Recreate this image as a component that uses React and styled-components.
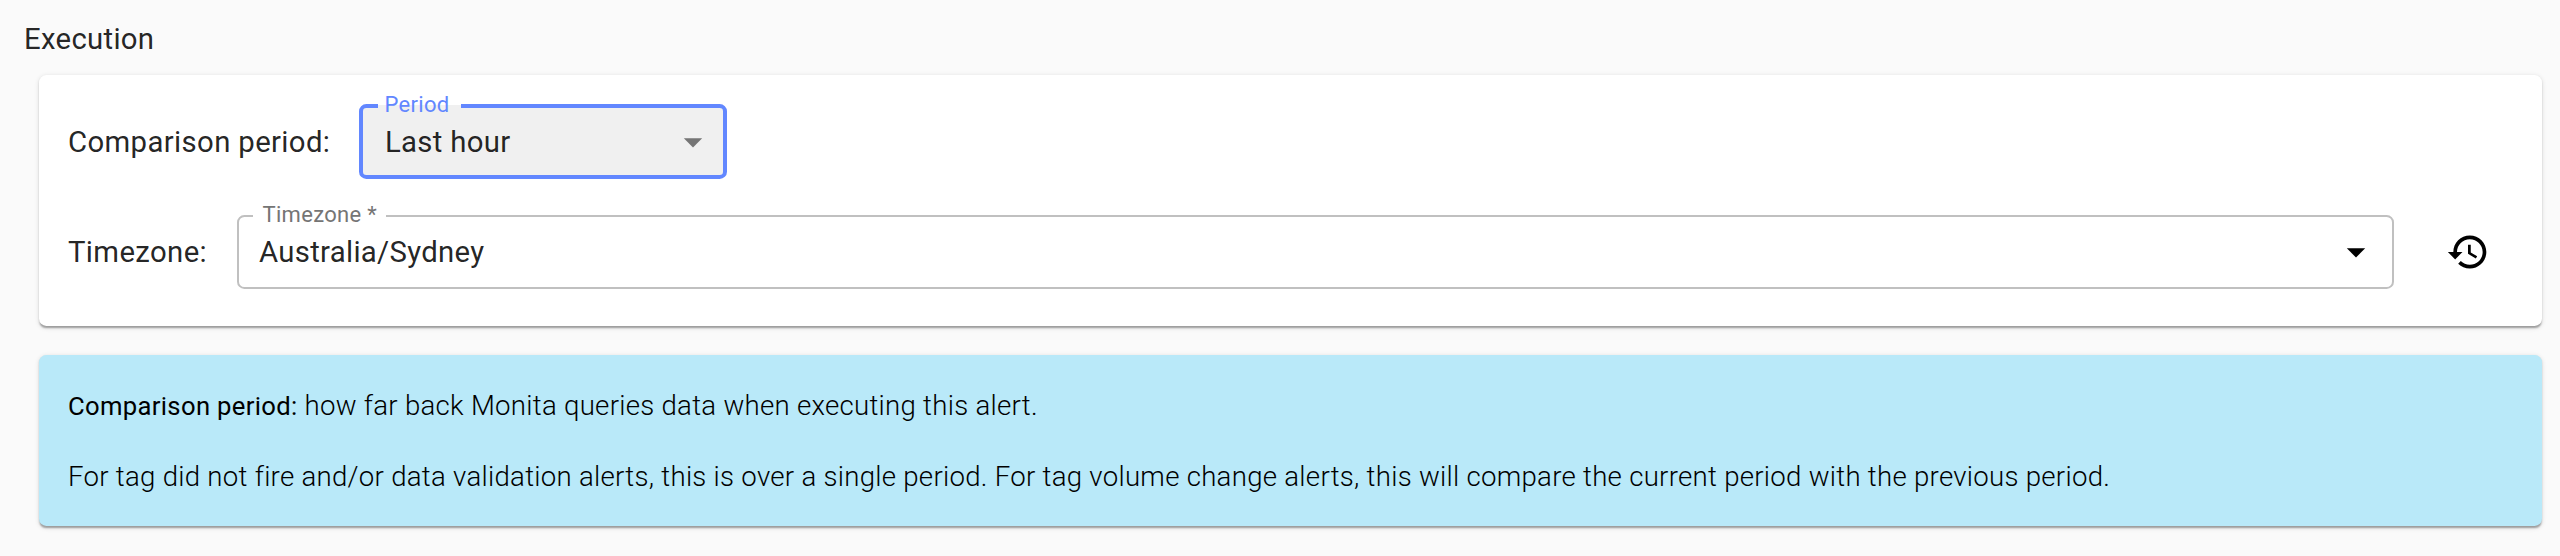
import React from "react";
import styled, { createGlobalStyle } from "styled-components";

const GlobalStyle = createGlobalStyle`
  *, *::before, *::after { box-sizing: border-box; }
  body {
    margin: 0;
    background: #fafafa;
    color: rgba(0, 0, 0, 0.87);
    font-family: Roboto, "Liberation Sans", sans-serif;
  }
`;

const Page = styled.main`
  min-height: 556px;
  padding: 17px 18px 0 24px;
`;

const Heading = styled.h2`
  margin: 0;
  height: 58px;
  font-size: 29.33px;
  font-weight: 400;
  line-height: 44px;
  letter-spacing: 0.3px;
`;

const Panel = styled.section`
  margin-left: 15px;
  border-radius: 7.33px;
  background: ${(p) => p.$color};
  box-shadow: 0 3.67px 1.83px -1.83px rgba(0, 0, 0, 0.2),
    0 1.83px 1.83px 0 rgba(0, 0, 0, 0.14),
    0 1.83px 5.5px 0 rgba(0, 0, 0, 0.12);
`;

const FormPanel = styled(Panel)`
  display: flex;
  flex-direction: column;
  gap: 36px;
  height: 251px;
  margin-bottom: 29px;
  padding: 29px 29px 0;
`;

const InfoPanel = styled(Panel)`
  display: flex;
  flex-direction: column;
  gap: 31px;
  height: 171px;
  padding: 31px 29px 0;
`;

const Row = styled.div`
  display: flex;
  align-items: center;
`;

const RowLabel = styled.label`
  flex: none;
  width: ${(p) => p.$width}px;
  font-size: 29.33px;
  line-height: 44px;
  letter-spacing: 0.36px;
  white-space: nowrap;
`;

const Field = styled.div`
  position: relative;
  display: flex;
  align-items: center;
  justify-content: space-between;
  flex: ${(p) => (p.$focused ? "none" : "1")};
  width: ${(p) => (p.$focused ? "368px" : "auto")};
  height: ${(p) => (p.$focused ? "75px" : "74px")};
  padding: ${(p) => (p.$focused ? "0 8px 0 22px" : "0 14px 0 20px")};
  border: ${(p) => (p.$focused ? "4px solid #6287ff" : "2px solid #c0c0c0")};
  border-radius: 7.33px;
  background: ${(p) => (p.$focused ? "#f0f0f0" : "#fff")};
`;

const FloatingLabel = styled.span`
  position: absolute;
  top: ${(p) => (p.$focused ? "-4px" : "-2px")};
  left: ${(p) => (p.$focused ? "15px" : "14px")};
  display: flex;
  align-items: center;
  width: ${(p) => (p.$focused ? "83px" : "133px")};
  height: ${(p) => (p.$focused ? "4px" : "2px")};
  padding: 0 0 2px ${(p) => (p.$focused ? "6.5px" : "9.5px")};
  background: ${(p) =>
    p.$focused ? "linear-gradient(#fff 1px, #f0f0f0 1px)" : "#fff"};
  color: ${(p) => (p.$focused ? "#6287ff" : "#757575")};
  font-size: 22px;
  line-height: 22px;
  letter-spacing: 0.3px;
  white-space: nowrap;
`;

const Value = styled.span`
  font-size: 29.33px;
  line-height: 36px;
  letter-spacing: 0.3px;
`;

const Icon = styled.svg`
  flex: none;
  width: 44px;
  height: 44px;
  fill: ${(p) => p.$color};
`;

const IconButton = styled.button`
  display: flex;
  margin: 0 23px 0 52px;
  padding: 0;
  border: 0;
  background: none;
`;

const Paragraph = styled.p`
  margin: 0;
  color: #000;
  font-size: 27.64px;
  font-weight: 300;
  line-height: 40px;
  letter-spacing: 0.265px;
`;

const Term = styled.b`
  font-size: 25.67px;
  font-weight: 400;
  letter-spacing: 0.32px;
`;

function DropdownArrow({ color }) {
  return (
    <Icon viewBox="0 0 24 24" $color={color}>
      <path d="M7 10l5 5 5-5z" />
    </Icon>
  );
}

function HistoryIcon() {
  return (
    <Icon viewBox="0 0 24 24" $color="#000">
      <path d="M13 3c-4.97 0-9 4.03-9 9H1l3.89 3.89.07.14L9 12H6c0-3.87 3.13-7 7-7s7 3.13 7 7-3.13 7-7 7c-1.93 0-3.68-.79-4.94-2.06l-1.42 1.42C8.27 19.99 10.51 21 13 21c4.97 0 9-4.03 9-9s-4.03-9-9-9zm-1 5v5l4.28 2.54.72-1.21-3.5-2.08V8H12z" />
    </Icon>
  );
}

export default function App() {
  return (
    <>
      <GlobalStyle />
      <Page>
        <Heading>Execution</Heading>
        <FormPanel $color="#fff">
          <Row>
            <RowLabel $width={291}>Comparison period:</RowLabel>
            <Field $focused>
              <FloatingLabel $focused>Period</FloatingLabel>
              <Value>Last hour</Value>
              <DropdownArrow color="#757575" />
            </Field>
          </Row>
          <Row>
            <RowLabel $width={169}>Timezone:</RowLabel>
            <Field>
              <FloatingLabel>Timezone *</FloatingLabel>
              <Value>Australia/Sydney</Value>
              <DropdownArrow color="#000" />
            </Field>
            <IconButton aria-label="Reset timezone">
              <HistoryIcon />
            </IconButton>
          </Row>
        </FormPanel>
        <InfoPanel $color="#b9e9f9">
          <Paragraph>
            <Term>Comparison period:</Term> how far back Monita queries data
            when executing this alert.
          </Paragraph>
          <Paragraph>
            For tag did not fire and/or data validation alerts, this is over a
            single period. For tag volume change alerts, this will compare the
            current period with the previous period.
          </Paragraph>
        </InfoPanel>
      </Page>
    </>
  );
}
